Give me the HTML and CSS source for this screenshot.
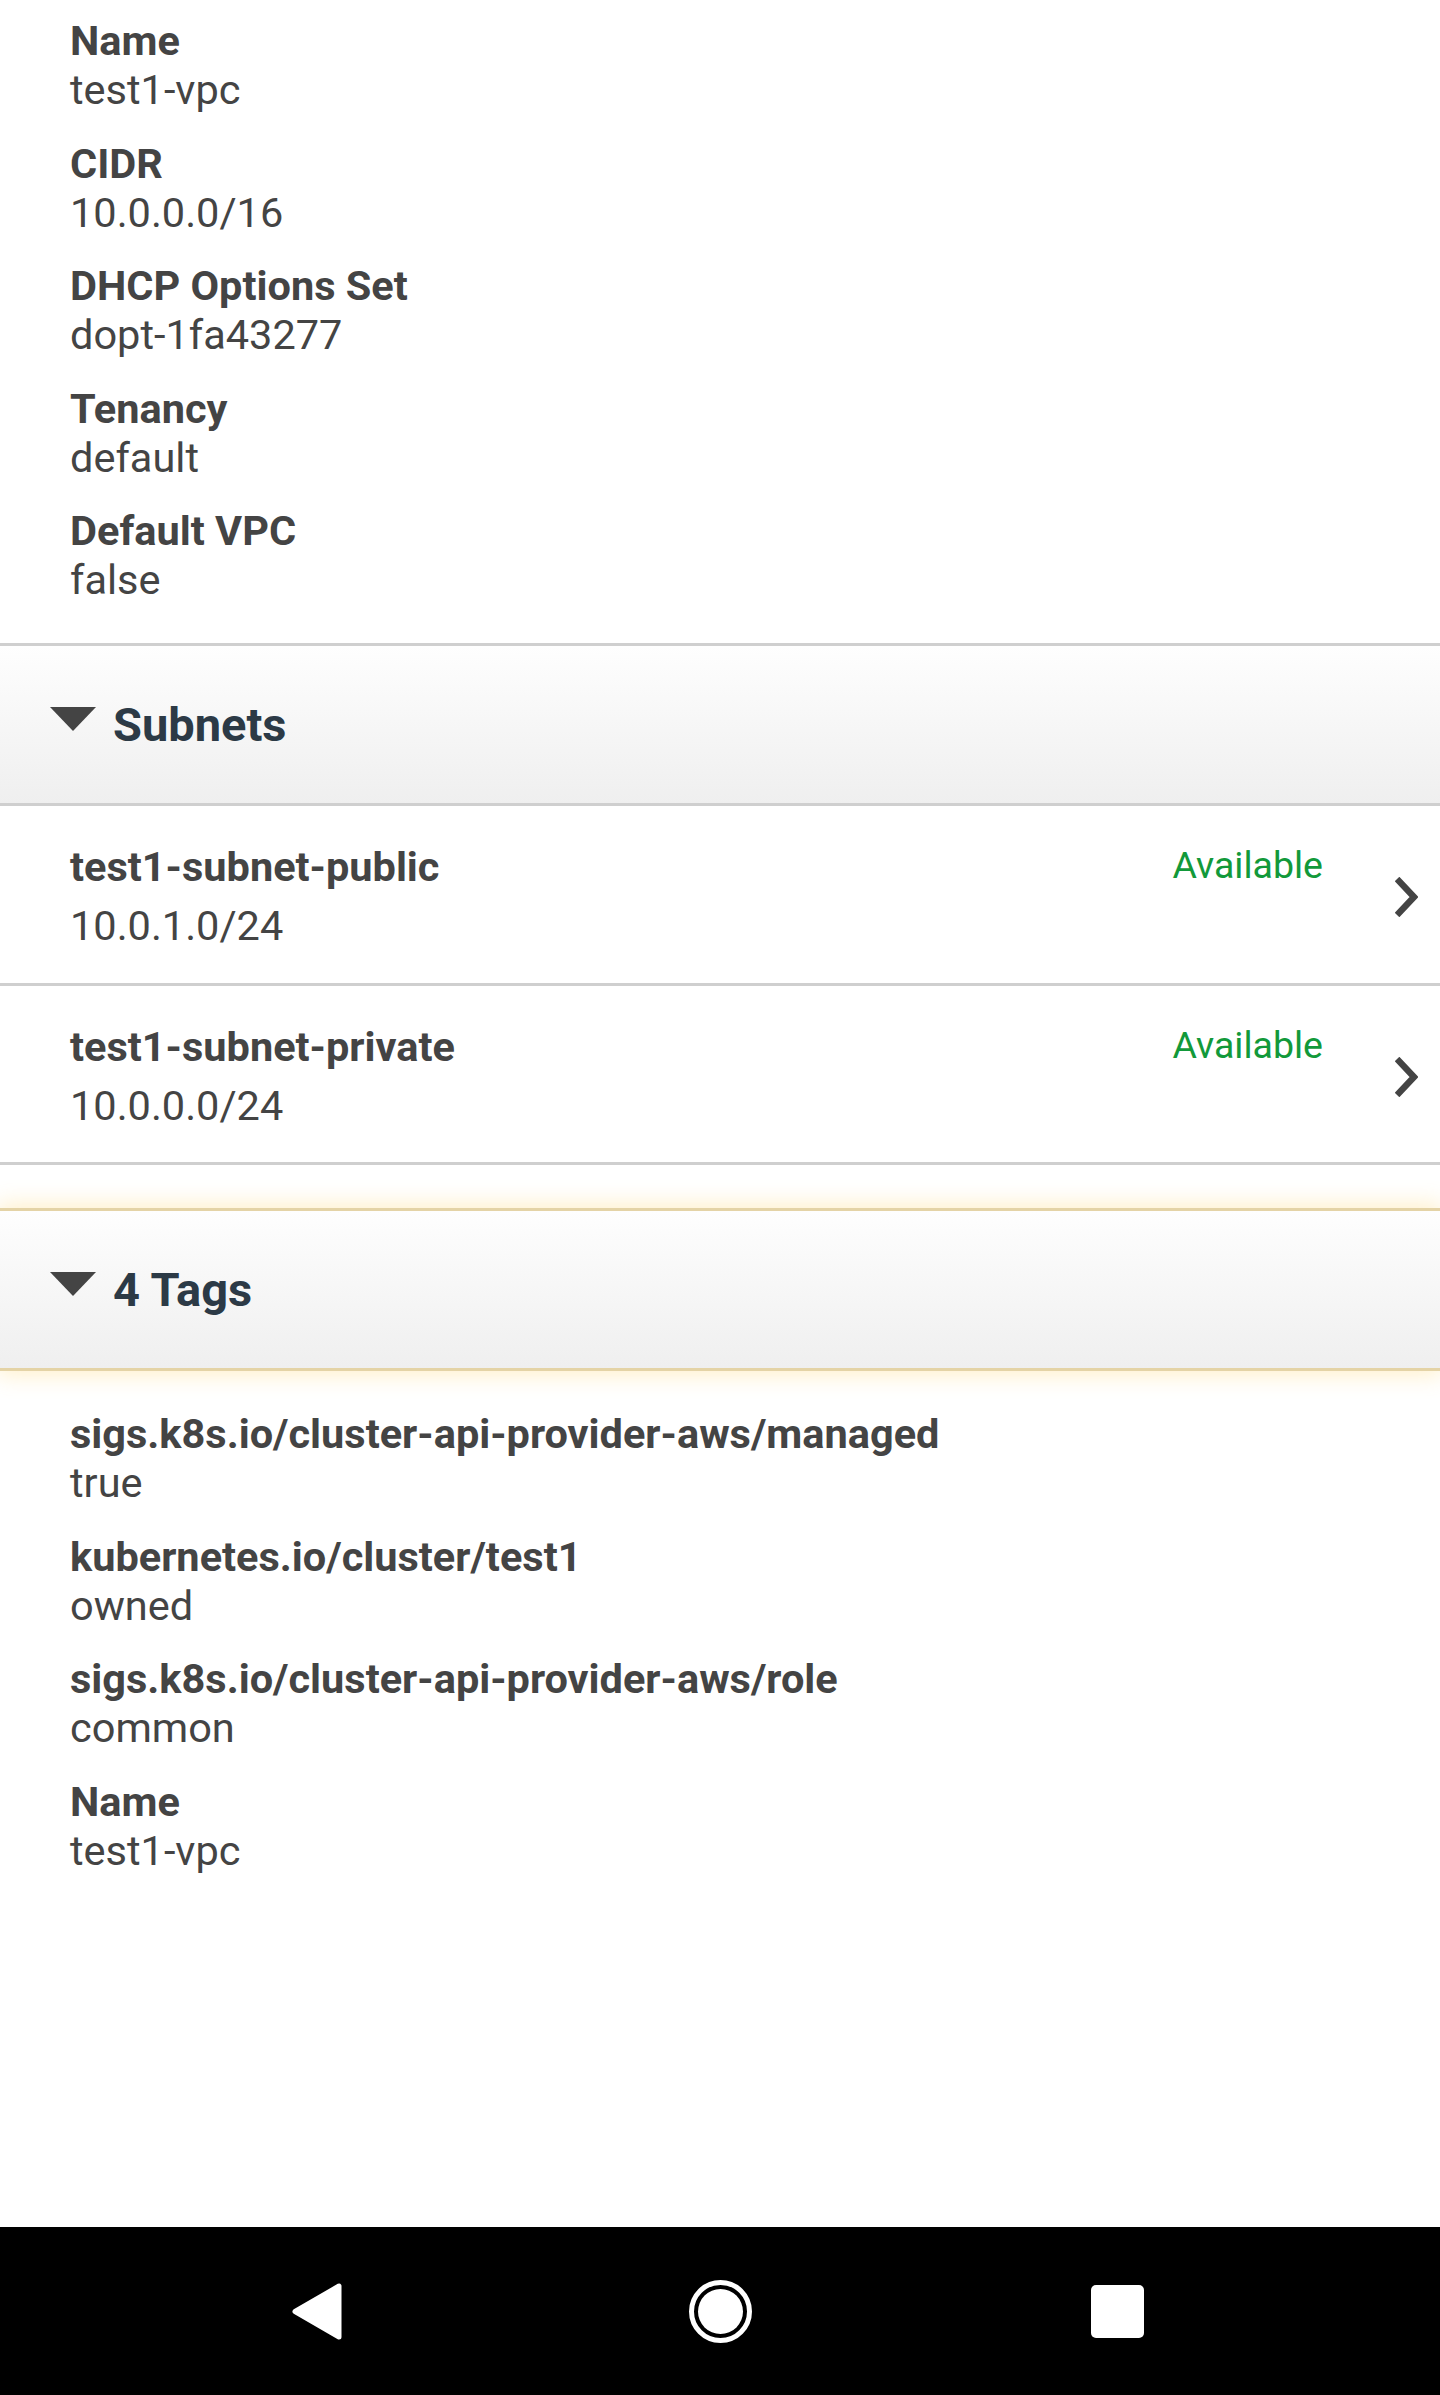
FILE: index.html
```html
<!DOCTYPE html>
<html lang="en">
<head>
<meta charset="utf-8">
<title>VPC details</title>
<link rel="stylesheet" href="styles.css">
</head>
<body>
<div class="screen">
  <main class="content">
    <section class="details">
      <div class="field"><div class="label">Name</div><div class="value">test1-vpc</div></div>
      <div class="field"><div class="label">CIDR</div><div class="value">10.0.0.0/16</div></div>
      <div class="field"><div class="label">DHCP Options Set</div><div class="value">dopt-1fa43277</div></div>
      <div class="field"><div class="label">Tenancy</div><div class="value">default</div></div>
      <div class="field"><div class="label">Default VPC</div><div class="value">false</div></div>
    </section>

    <div class="panel-header">
      <span class="caret"></span>
      <h2 class="panel-title">Subnets</h2>
    </div>
    <ul class="subnet-list">
      <li class="subnet-row">
        <div class="subnet-info">
          <div class="subnet-name">test1-subnet-public</div>
          <div class="subnet-cidr">10.0.1.0/24</div>
        </div>
        <div class="subnet-status">Available</div>
        <svg class="chevron" viewBox="0 0 23 40" aria-hidden="true"><polyline points="2,2 19,20 2,38" fill="none" stroke="#444" stroke-width="6.5" stroke-linejoin="miter"/></svg>
      </li>
      <li class="subnet-row">
        <div class="subnet-info">
          <div class="subnet-name">test1-subnet-private</div>
          <div class="subnet-cidr">10.0.0.0/24</div>
        </div>
        <div class="subnet-status">Available</div>
        <svg class="chevron" viewBox="0 0 23 40" aria-hidden="true"><polyline points="2,2 19,20 2,38" fill="none" stroke="#444" stroke-width="6.5" stroke-linejoin="miter"/></svg>
      </li>
    </ul>

    <div class="panel-header panel-header--focused">
      <span class="caret"></span>
      <h2 class="panel-title">4 Tags</h2>
    </div>
    <section class="details details--tags">
      <div class="field"><div class="label">sigs.k8s.io/cluster-api-provider-aws/managed</div><div class="value">true</div></div>
      <div class="field"><div class="label">kubernetes.io/cluster/test1</div><div class="value">owned</div></div>
      <div class="field"><div class="label">sigs.k8s.io/cluster-api-provider-aws/role</div><div class="value">common</div></div>
      <div class="field"><div class="label">Name</div><div class="value">test1-vpc</div></div>
    </section>
  </main>

  <nav class="navbar">
    <svg class="nav-back" width="50" height="57" viewBox="0 0 50 57" aria-hidden="true"><polygon points="47,3 47,54 3,28.5" fill="#fff" stroke="#fff" stroke-width="5" stroke-linejoin="round"/></svg>
    <svg class="nav-home" width="63" height="63" viewBox="0 0 63 63" aria-hidden="true"><circle cx="31.5" cy="31.5" r="29" fill="none" stroke="#fff" stroke-width="5"/><circle cx="31.5" cy="31.5" r="22.5" fill="#fff"/></svg>
    <svg class="nav-recents" width="53" height="53" viewBox="0 0 53 53" aria-hidden="true"><rect x="0" y="0" width="53" height="53" rx="5" fill="#fff"/></svg>
  </nav>
</div>
</body>
</html>
```

FILE: styles.css
```css
html, body {
  margin: 0;
  padding: 0;
  background: #ffffff;
}

body {
  font-family: Roboto, "Noto Sans", "Liberation Sans", sans-serif;
  color: #444444;
}

.screen {
  display: flex;
  flex-direction: column;
  min-height: 2395px;
}

.content {
  flex: 1;
}

/* key / value detail lists */
.details {
  padding: 18px 0 40px 70px;
}

.details--tags {
  padding-top: 40px;
}

.field {
  margin-bottom: 27.5px;
}

.field:last-child {
  margin-bottom: 0;
}

.label {
  font-size: 41.5px;
  font-weight: 700;
  line-height: 46px;
  color: #444444;
}

.value {
  margin-top: 3px;
  font-size: 41.5px;
  font-weight: 400;
  line-height: 46px;
  color: #444444;
}

/* collapsible panel headers */
.panel-header {
  display: flex;
  align-items: center;
  height: 157px;
  padding-left: 50px;
  border-top: 3px solid #cfcfcf;
  border-bottom: 3px solid #cfcfcf;
  background: linear-gradient(#fefefe, #efefef);
}

.panel-header--focused {
  margin-top: 43px;
  border-top-color: #e4d3a6;
  border-bottom-color: #e4d3a6;
  box-shadow: 0 0 22px 3px rgba(255, 205, 80, 0.32);
}

.caret {
  width: 0;
  height: 0;
  border-left: 23px solid transparent;
  border-right: 23px solid transparent;
  border-top: 24px solid #444444;
  margin-right: 17px;
  margin-bottom: 11px;
}

.panel-title {
  margin: 0;
  font-size: 47px;
  font-weight: 700;
  line-height: 46px;
  color: #2c3a46;
}

/* subnet rows */
.subnet-list {
  list-style: none;
  margin: 0;
  padding: 0;
}

.subnet-row {
  display: flex;
  padding: 38px 22px 33.5px 70px;
  border-bottom: 3px solid #cfcfcf;
}

.subnet-info {
  flex: 1;
}

.subnet-name {
  font-size: 41.5px;
  font-weight: 700;
  line-height: 46px;
  color: #444444;
}

.subnet-cidr {
  margin-top: 13px;
  font-size: 41.5px;
  line-height: 46px;
  color: #444444;
}

.subnet-status {
  margin-top: 3px;
  font-size: 37.5px;
  line-height: 36px;
  color: #12993a;
}

.chevron {
  flex: none;
  width: 23px;
  height: 40px;
  margin-left: 72px;
  margin-top: 33px;
}

/* android navigation bar */
.navbar {
  display: grid;
  grid-template-columns: 406px 400px 394px;
  padding-left: 114px;
  height: 168px;
  align-items: center;
  justify-items: center;
  background: #000000;
}

.nav-back,
.nav-home,
.nav-recents {
  display: block;
}
```
